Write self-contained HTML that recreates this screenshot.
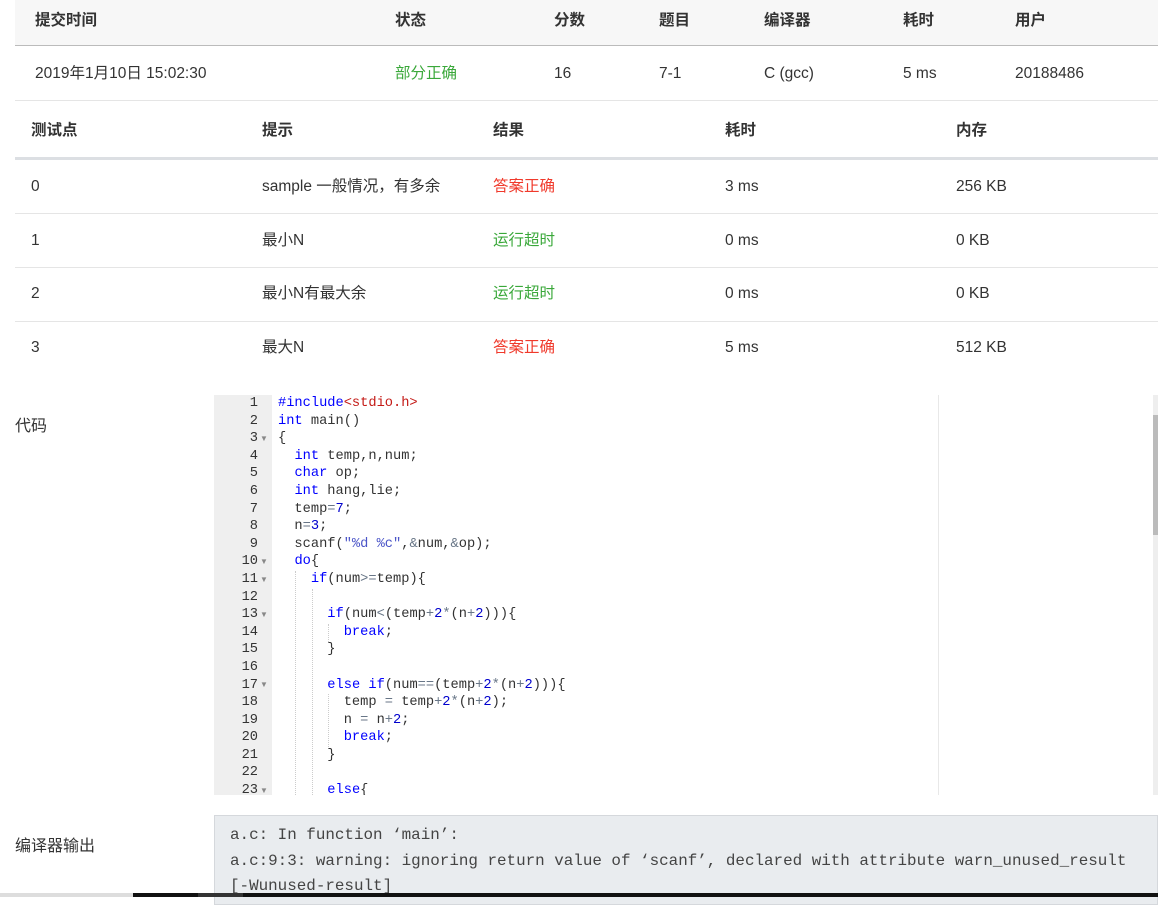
<!DOCTYPE html>
<html><head><meta charset="utf-8"><style>
*{margin:0;padding:0;box-sizing:border-box}
body{width:1158px;height:897px;overflow:hidden;background:#fff;font-family:"Liberation Sans","Noto Sans CJK SC",sans-serif;color:#333;font-size:15.5px;position:relative}
.a{position:absolute;white-space:pre;line-height:20px;height:20px}
.b{font-weight:bold}
.g{color:#3aa83a}.r{color:#f0392b}
.code{position:absolute;left:214px;top:395px;width:944px;height:400px;overflow:hidden}
.gut{position:absolute;left:0;top:0;width:58px;height:400px;background:#efefef}
.ln{position:absolute;font-family:"Liberation Mono",monospace;font-size:13.7px;line-height:17.6px;color:#333;white-space:pre}
.ar{position:absolute;left:46px;font-size:8px;color:#888;line-height:17.6px}
.k{color:#0000ff}.n{color:#0000cd}.o{color:#687687}.s{color:#4b55c8}.inc{color:#c41a16}
</style></head><body>
<div style="position:absolute;left:15px;top:0;width:1143px;height:46px;background:#f7f7f7;border-bottom:1px solid #bbb"></div>
<div style="position:absolute;left:15px;top:100px;width:1143px;height:1px;background:#e5e5e5"></div>
<div style="position:absolute;left:15px;top:157px;width:1143px;height:3px;background:#dcdfe3"></div>
<div style="position:absolute;left:15px;top:213px;width:1143px;height:1px;background:#e5e5e5"></div>
<div style="position:absolute;left:15px;top:267px;width:1143px;height:1px;background:#e5e5e5"></div>
<div style="position:absolute;left:15px;top:321px;width:1143px;height:1px;background:#e5e5e5"></div>

<div class="a b" style="left:35px;top:11px">提交时间</div>
<div class="a b" style="left:395px;top:11px">状态</div>
<div class="a b" style="left:554px;top:11px">分数</div>
<div class="a b" style="left:659px;top:11px">题目</div>
<div class="a b" style="left:764px;top:11px">编译器</div>
<div class="a b" style="left:903px;top:11px">耗时</div>
<div class="a b" style="left:1015px;top:11px">用户</div>

<div class="a" style="left:35px;top:64px">2019年1月10日 15:02:30</div>
<div class="a g" style="left:395px;top:64px">部分正确</div>
<div class="a" style="left:554px;top:64px">16</div>
<div class="a" style="left:659px;top:64px">7-1</div>
<div class="a" style="left:764px;top:64px">C (gcc)</div>
<div class="a" style="left:903px;top:64px">5 ms</div>
<div class="a" style="left:1015px;top:64px">20188486</div>

<div class="a b" style="left:31px;top:121px">测试点</div>
<div class="a b" style="left:262px;top:121px">提示</div>
<div class="a b" style="left:493px;top:121px">结果</div>
<div class="a b" style="left:725px;top:121px">耗时</div>
<div class="a b" style="left:956px;top:121px">内存</div>

<div class="a" style="left:31px;top:177px">0</div><div class="a" style="left:262px;top:177px">sample 一般情况，有多余</div><div class="a r" style="left:493px;top:177px">答案正确</div><div class="a" style="left:725px;top:177px">3 ms</div><div class="a" style="left:956px;top:177px">256 KB</div>
<div class="a" style="left:31px;top:231px">1</div><div class="a" style="left:262px;top:231px">最小N</div><div class="a g" style="left:493px;top:231px">运行超时</div><div class="a" style="left:725px;top:231px">0 ms</div><div class="a" style="left:956px;top:231px">0 KB</div>
<div class="a" style="left:31px;top:284px">2</div><div class="a" style="left:262px;top:284px">最小N有最大余</div><div class="a g" style="left:493px;top:284px">运行超时</div><div class="a" style="left:725px;top:284px">0 ms</div><div class="a" style="left:956px;top:284px">0 KB</div>
<div class="a" style="left:31px;top:338px">3</div><div class="a" style="left:262px;top:338px">最大N</div><div class="a r" style="left:493px;top:338px">答案正确</div><div class="a" style="left:725px;top:338px">5 ms</div><div class="a" style="left:956px;top:338px">512 KB</div>

<div class="a" style="left:15px;top:417px;font-size:16px">代码</div>
<div class="code">
<div class="gut"></div>
<div style="position:absolute;left:724px;top:0;width:1px;height:400px;background:#e8e8e8"></div>
<div style="position:absolute;left:939px;top:0;width:5px;height:400px;background:#eee"></div>
<div style="position:absolute;left:939px;top:20px;width:5px;height:120px;background:#bbb"></div>
<div style="position:absolute;left:81px;top:176px;height:224px;border-left:1px dotted #ccc"></div>
<div style="position:absolute;left:98px;top:194px;height:206px;border-left:1px dotted #ccc"></div>
<div style="position:absolute;left:114px;top:229px;height:18px;border-left:1px dotted #ccc"></div>
<div style="position:absolute;left:114px;top:299px;height:53px;border-left:1px dotted #ccc"></div>
<div class="ln" style="left:0;top:0;width:44px;text-align:right">1
2
3
4
5
6
7
8
9
10
11
12
13
14
15
16
17
18
19
20
21
22
23</div>
<div class="ar" style="top:35px">▼</div>
<div class="ar" style="top:158px">▼</div>
<div class="ar" style="top:176px">▼</div>
<div class="ar" style="top:211px">▼</div>
<div class="ar" style="top:281px">▼</div>
<div class="ar" style="top:387px">▼</div>
<div class="ln" style="left:64px;top:0"><span class="k">#include</span><span class="inc">&lt;stdio.h&gt;</span>
<span class="k">int</span> main()
{
  <span class="k">int</span> temp,n,num;
  <span class="k">char</span> op;
  <span class="k">int</span> hang,lie;
  temp<span class="o">=</span><span class="n">7</span>;
  n<span class="o">=</span><span class="n">3</span>;
  scanf(<span class="s">"%d %c"</span>,<span class="o">&amp;</span>num,<span class="o">&amp;</span>op);
  <span class="k">do</span>{
    <span class="k">if</span>(num<span class="o">&gt;=</span>temp){

      <span class="k">if</span>(num<span class="o">&lt;</span>(temp<span class="o">+</span><span class="n">2</span><span class="o">*</span>(n<span class="o">+</span><span class="n">2</span>))){
        <span class="k">break</span>;
      }

      <span class="k">else if</span>(num<span class="o">==</span>(temp<span class="o">+</span><span class="n">2</span><span class="o">*</span>(n<span class="o">+</span><span class="n">2</span>))){
        temp <span class="o">=</span> temp<span class="o">+</span><span class="n">2</span><span class="o">*</span>(n<span class="o">+</span><span class="n">2</span>);
        n <span class="o">=</span> n<span class="o">+</span><span class="n">2</span>;
        <span class="k">break</span>;
      }

      <span class="k">else</span>{</div>
</div>

<div class="a" style="left:15px;top:837px;font-size:16px">编译器输出</div>
<div style="position:absolute;left:214px;top:815px;width:944px;height:90px;background:#e9ecef;border:1px solid #d5d8dc"></div>
<div style="position:absolute;left:230px;top:823px;white-space:pre;font-family:'Liberation Mono',monospace;font-size:15.9px;line-height:25.5px;color:#444">a.c: In function ‘main’:
a.c:9:3: warning: ignoring return value of ‘scanf’, declared with attribute warn_unused_result
[-Wunused-result]</div>
<div style="position:absolute;left:0;top:893px;width:133px;height:4px;background:#ddd"></div>
<div style="position:absolute;left:133px;top:893px;width:1025px;height:4px;background:#111"></div>
<div style="position:absolute;left:198px;top:893px;width:45px;height:4px;background:#333"></div>
</body></html>
